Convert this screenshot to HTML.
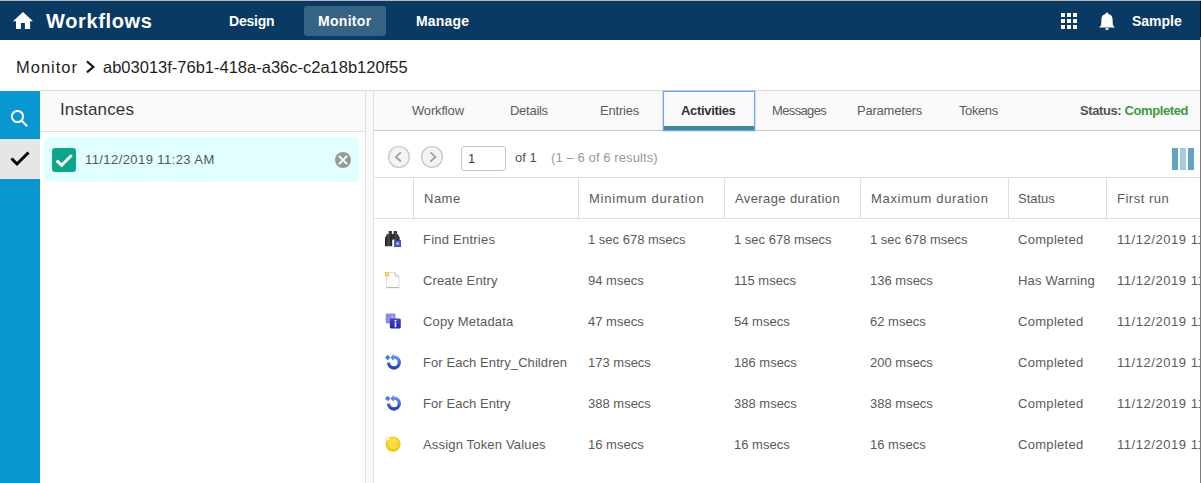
<!DOCTYPE html>
<html><head><meta charset="utf-8">
<style>
*{margin:0;padding:0;box-sizing:border-box}
html,body{width:1201px;height:483px;overflow:hidden;background:#fff;font-family:"Liberation Sans",sans-serif;position:relative}
.a{position:absolute;white-space:nowrap}
#topline{left:0;top:0;width:1201px;height:1px;background:#b9b6b5}
#hdr{left:0;top:1px;width:1201px;height:39px;background:#093a63}
#rline{left:1200px;top:37px;width:1px;height:446px;background:#7c7c7c;z-index:10}
#rline2{left:1200px;top:1px;width:1px;height:36px;background:#151515;z-index:10}
.nav{color:#fff;font-weight:bold;font-size:14px;top:13px;line-height:16px}
#act{left:304px;top:6px;width:82px;height:30px;background:#366284;border-radius:3px}
.crumb{font-size:16.5px;color:#1e1e1e;top:58px;line-height:19px}
#pline{left:40px;top:90px;width:1161px;height:1px;background:#dcdcdc}
#side{left:0;top:91px;width:40px;height:392px;background:#0897d1}
#sidegray{left:0;top:139px;width:40px;height:40px;background:#e6e6e6}
#insthdr{left:40px;top:91px;width:325px;height:41px;background:#fafafa;border-bottom:1px solid #dedede}
#gut{left:365px;top:91px;width:9px;height:392px;background:#f9f9f9;border-left:1px solid #e0e0e0;border-right:1px solid #e0e0e0}
#tabbar{left:374px;top:91px;width:826px;height:40px;background:#fafafa;border-bottom:1px solid #c8c8c8}
.tab{font-size:13px;color:#5c5c5c;top:103px;line-height:15px}
#acttab{left:663px;top:91px;width:92px;height:40px;border:1px solid #74a4f0;box-shadow:0 0 0 0.6px rgba(116,164,240,0.55);background:#fafafa}
#actbar{left:664px;top:126px;width:90px;height:4px;background:#3d8a94}
.cell{font-size:13px;color:#5a5a5a;line-height:15px}
.hline{height:1px;background:#e0e0e0}
.vline{width:1px;background:#e0e0e0}
</style></head><body>
<div class="a" id="topline"></div>
<div class="a" id="hdr"></div>
<!-- home icon -->
<svg class="a" style="left:13px;top:11px" width="21" height="19" viewBox="0 0 21 19"><path d="M10 1 L20 10.2 L17.1 10.2 L17.1 17.9 L11.9 17.9 L11.9 11.9 L7.9 11.9 L7.9 17.9 L3 17.9 L3 10.2 L0 10.2 Z" fill="#fff"/></svg>
<div class="a nav" style="left:46px;top:10px;font-size:20px;line-height:22px;letter-spacing:0.65px">Workflows</div>
<div class="a" id="act"></div>
<div class="a nav" style="left:229px;letter-spacing:-0.2px">Design</div>
<div class="a nav" style="left:318px;letter-spacing:0.3px">Monitor</div>
<div class="a nav" style="left:416px;letter-spacing:0.17px">Manage</div>
<!-- grid icon -->
<svg class="a" style="left:1061px;top:13px" width="16" height="16" viewBox="0 0 16 16" fill="#fff">
<rect x="0" y="0" width="4" height="4"/><rect x="6" y="0" width="4" height="4"/><rect x="12" y="0" width="4" height="4"/>
<rect x="0" y="6" width="4" height="4"/><rect x="6" y="6" width="4" height="4"/><rect x="12" y="6" width="4" height="4"/>
<rect x="0" y="12" width="4" height="4"/><rect x="6" y="12" width="4" height="4"/><rect x="12" y="12" width="4" height="4"/>
</svg>
<!-- bell -->
<svg class="a" style="left:1099px;top:12px" width="16" height="19" viewBox="0 0 16 19"><circle cx="8" cy="1.6" r="1.1" fill="#fff"/><path d="M8 1.8 C4.6 1.8 2.6 4 2.4 7.5 L2.2 12.2 C2.1 13.5 1 14.5 0.1 15.4 L15.9 15.4 C15 14.5 13.9 13.5 13.8 12.2 L13.6 7.5 C13.4 4 11.4 1.8 8 1.8 Z" fill="#fff"/><ellipse cx="8" cy="17" rx="1.7" ry="1" fill="#fff"/></svg>
<div class="a nav" style="left:1132px">Sample</div>
<div class="a" id="rline"></div><div class="a" id="rline2"></div>

<!-- breadcrumb -->
<div class="a crumb" style="left:16px;letter-spacing:0.98px">Monitor</div>
<svg class="a" style="left:86px;top:60px" width="10" height="14" viewBox="0 0 10 14"><path d="M0.9 1.4 L7.4 6.9 L0.9 12.4" stroke="#1e1e1e" stroke-width="2.2" fill="none"/></svg>
<div class="a crumb" style="left:103px">ab03013f-76b1-418a-a36c-c2a18b120f55</div>

<div class="a" id="pline"></div>
<div class="a" id="side"></div>
<div class="a" id="sidegray"></div>
<svg class="a" style="left:10px;top:110px" width="20" height="20" viewBox="0 0 20 20"><circle cx="7.5" cy="6.5" r="5.6" stroke="#fff" stroke-width="2" fill="none"/><path d="M11.5 10.5 L17.2 16.2" stroke="#fff" stroke-width="2"/></svg>
<svg class="a" style="left:10px;top:150px" width="20" height="17" viewBox="0 0 20 17"><path d="M1.5 8.5 L7 14 L18.5 2.5" stroke="#000" stroke-width="3" fill="none"/></svg>

<div class="a" id="insthdr"></div>
<div class="a" style="left:60px;top:100px;font-size:17px;line-height:20px;color:#333;letter-spacing:0.14px">Instances</div>
<div class="a" style="left:44px;top:137px;width:315px;height:45px;background:#e2ffff;border-radius:5px"></div>
<div class="a" style="left:52px;top:148px;width:24px;height:24px;background:#0ea68a;border-radius:3px"></div>
<svg class="a" style="left:52px;top:148px" width="24" height="24" viewBox="0 0 24 24"><path d="M4.6 12.6 L9.6 17.2 L19.6 7.2" stroke="#fff" stroke-width="3" fill="none"/></svg>
<div class="a" style="left:85px;top:152px;font-size:13px;line-height:15px;color:#555;letter-spacing:0.42px">11/12/2019 11:23 AM</div>
<svg class="a" style="left:335px;top:152px" width="16" height="16" viewBox="0 0 16 16"><circle cx="8" cy="8" r="8" fill="#999"/><path d="M3.9 3.9 L12.1 12.1 M12.1 3.9 L3.9 12.1" stroke="#fff" stroke-width="2"/></svg>

<div class="a" id="gut"></div>
<div class="a" id="tabbar"></div>
<div class="a" id="acttab"></div>
<div class="a" id="actbar"></div>
<div class="a tab" style="left:412px;letter-spacing:-0.17px">Workflow</div>
<div class="a tab" style="left:510px;letter-spacing:-0.27px">Details</div>
<div class="a tab" style="left:600px;letter-spacing:-0.2px">Entries</div>
<div class="a tab" style="left:681px;font-weight:bold;color:#333;letter-spacing:-0.33px">Activities</div>
<div class="a tab" style="left:772px;letter-spacing:-0.64px">Messages</div>
<div class="a tab" style="left:857px;letter-spacing:-0.21px">Parameters</div>
<div class="a tab" style="left:959px;letter-spacing:-0.4px">Tokens</div>
<div class="a tab" style="left:1080px;font-weight:bold;color:#555;letter-spacing:-0.4px">Status: <span style="color:#3c9a3c">Completed</span></div>

<!-- pagination -->
<svg class="a" style="left:386px;top:144px" width="26" height="26" viewBox="0 0 26 26"><circle cx="12.9" cy="12.9" r="10.4" fill="#f3f3f3" stroke="#c6c6c6" stroke-width="1.2"/><path d="M14.9 8.3 L9.9 12.9 L14.9 17.5" stroke="#a2a2a2" stroke-width="1.8" fill="none"/></svg>
<svg class="a" style="left:419px;top:144px" width="26" height="26" viewBox="0 0 26 26"><circle cx="13" cy="12.9" r="10.4" fill="#f3f3f3" stroke="#c6c6c6" stroke-width="1.2"/><path d="M11.4 8.3 L16.4 12.9 L11.4 17.5" stroke="#a2a2a2" stroke-width="1.8" fill="none"/></svg>
<div class="a" style="left:461px;top:146px;width:45px;height:25px;border:1px solid #c8c8c8;border-radius:3px;background:#fff"></div>
<div class="a cell" style="left:468px;top:151px;color:#3a3a4a">1</div>
<div class="a cell" style="left:515px;top:150px;color:#505050">of 1</div>
<div class="a cell" style="left:551px;top:150px;color:#999;letter-spacing:0.1px">(1 – 6 of 6 results)</div>
<svg class="a" style="left:1172px;top:148px" width="22" height="22" viewBox="0 0 22 22"><rect x="0" y="0" width="6" height="22" fill="#62a3c0"/><rect x="8" y="0" width="6" height="22" fill="#a9cbde"/><rect x="16" y="0" width="6" height="22" fill="#62a3c0"/></svg>

<!-- table -->
<div class="a hline" style="left:374px;top:177px;width:826px"></div>
<div class="a hline" style="left:374px;top:218px;width:826px"></div>
<div class="a vline" style="left:413px;top:178px;height:40px"></div>
<div class="a vline" style="left:578px;top:178px;height:40px"></div>
<div class="a vline" style="left:724px;top:178px;height:40px"></div>
<div class="a vline" style="left:860px;top:178px;height:40px"></div>
<div class="a vline" style="left:1008px;top:178px;height:40px"></div>
<div class="a vline" style="left:1106px;top:178px;height:40px"></div>
<div class="a cell" style="left:424px;top:191px;letter-spacing:0.5px">Name</div>
<div class="a cell" style="left:589px;top:191px;letter-spacing:0.76px">Minimum duration</div>
<div class="a cell" style="left:735px;top:191px;letter-spacing:0.39px">Average duration</div>
<div class="a cell" style="left:871px;top:191px;letter-spacing:0.67px">Maximum duration</div>
<div class="a cell" style="left:1018px;top:191px">Status</div>
<div class="a cell" style="left:1117px;top:191px;letter-spacing:0.5px">First run</div>

<div class="a cell" style="left:423px;top:232px;letter-spacing:0.23px">Find Entries</div>
<div class="a cell" style="left:588px;top:232px">1 sec 678 msecs</div>
<div class="a cell" style="left:734px;top:232px">1 sec 678 msecs</div>
<div class="a cell" style="left:870px;top:232px">1 sec 678 msecs</div>
<div class="a cell" style="left:1018px;top:232px;letter-spacing:0.3px">Completed</div>
<div class="a cell" style="left:1117px;letter-spacing:0.55px;top:232px">11/12/2019 11:23 AM</div>
<div class="a cell" style="left:423px;top:273px;letter-spacing:0.14px">Create Entry</div>
<div class="a cell" style="left:588px;top:273px">94 msecs</div>
<div class="a cell" style="left:734px;top:273px">115 msecs</div>
<div class="a cell" style="left:870px;top:273px">136 msecs</div>
<div class="a cell" style="left:1018px;top:273px;letter-spacing:0.2px">Has Warning</div>
<div class="a cell" style="left:1117px;letter-spacing:0.55px;top:273px">11/12/2019 11:23 AM</div>
<div class="a cell" style="left:423px;top:314px;letter-spacing:0.17px">Copy Metadata</div>
<div class="a cell" style="left:588px;top:314px">47 msecs</div>
<div class="a cell" style="left:734px;top:314px">54 msecs</div>
<div class="a cell" style="left:870px;top:314px">62 msecs</div>
<div class="a cell" style="left:1018px;top:314px;letter-spacing:0.3px">Completed</div>
<div class="a cell" style="left:1117px;letter-spacing:0.55px;top:314px">11/12/2019 11:23 AM</div>
<div class="a cell" style="left:423px;top:355px;letter-spacing:0.08px">For Each Entry_Children</div>
<div class="a cell" style="left:588px;top:355px">173 msecs</div>
<div class="a cell" style="left:734px;top:355px">186 msecs</div>
<div class="a cell" style="left:870px;top:355px">200 msecs</div>
<div class="a cell" style="left:1018px;top:355px;letter-spacing:0.3px">Completed</div>
<div class="a cell" style="left:1117px;letter-spacing:0.55px;top:355px">11/12/2019 11:23 AM</div>
<div class="a cell" style="left:423px;top:396px;letter-spacing:0.07px">For Each Entry</div>
<div class="a cell" style="left:588px;top:396px">388 msecs</div>
<div class="a cell" style="left:734px;top:396px">388 msecs</div>
<div class="a cell" style="left:870px;top:396px">388 msecs</div>
<div class="a cell" style="left:1018px;top:396px;letter-spacing:0.3px">Completed</div>
<div class="a cell" style="left:1117px;letter-spacing:0.55px;top:396px">11/12/2019 11:23 AM</div>
<div class="a cell" style="left:423px;top:437px;letter-spacing:0.17px">Assign Token Values</div>
<div class="a cell" style="left:588px;top:437px">16 msecs</div>
<div class="a cell" style="left:734px;top:437px">16 msecs</div>
<div class="a cell" style="left:870px;top:437px">16 msecs</div>
<div class="a cell" style="left:1018px;top:437px;letter-spacing:0.3px">Completed</div>
<div class="a cell" style="left:1117px;letter-spacing:0.55px;top:437px">11/12/2019 11:23 AM</div>

<!-- binoculars -->
<svg class="a" style="left:385px;top:231px" width="16" height="16" viewBox="0 0 16 16">
<defs><linearGradient id="gb" x1="0" y1="0" x2="1" y2="0"><stop offset="0" stop-color="#1a1a1a"/><stop offset="0.5" stop-color="#4a4a4a"/><stop offset="1" stop-color="#1e1e1e"/></linearGradient></defs>
<path d="M3.6 0 H6.8 V3 H7.2 V15.3 H0 V7 L2 3 H3.6 Z" fill="url(#gb)"/>
<path d="M8.6 0 H12 V3 H12.6 L14.6 6.5 V15.3 H9.6 V8.5 H7.3 V3 H8.6 Z" fill="url(#gb)"/>
<rect x="6.6" y="3.5" width="1.6" height="5" fill="#333"/>
<rect x="9.8" y="9.6" width="6" height="6" fill="#3d68e0" stroke="#2a3f95" stroke-width="0.8"/>
<circle cx="12.6" cy="12.6" r="1.2" fill="#e8e048"/>
</svg>
<!-- document -->
<svg class="a" style="left:385px;top:272px" width="16" height="17" viewBox="0 0 16 17">
<path d="M1.5 0.5 H10 L14 4 V15.5 H1.5 Z" fill="#fdfdfd" stroke="#dcdcdc" stroke-width="1"/>
<path d="M1.8 15.6 H14.2" stroke="#b4b4b4" stroke-width="1.1"/>
<path d="M10 0.5 V4 H14" fill="#eeeeee" stroke="#c6c6c6" stroke-width="1"/>
<rect x="0" y="0" width="4.2" height="4.3" fill="#e9c85a"/>
<rect x="1.2" y="1.2" width="1.8" height="1.9" fill="#f6e7b0"/>
</svg>
<!-- copy metadata -->
<svg class="a" style="left:385px;top:313px" width="16" height="16" viewBox="0 0 16 16">
<defs><linearGradient id="gd" x1="0" y1="0" x2="0" y2="1"><stop offset="0" stop-color="#4747cf"/><stop offset="1" stop-color="#2424a6"/></linearGradient></defs>
<rect x="0.7" y="0.5" width="9.8" height="10" rx="1.3" fill="#8b8bf2"/>
<rect x="6.3" y="3.2" width="2" height="1.2" fill="#d8d8ff"/>
<rect x="4.8" y="5.6" width="11" height="9.8" rx="1.3" fill="url(#gd)"/>
<rect x="9.6" y="7" width="1.8" height="1.5" fill="#fff"/>
<rect x="9.7" y="9.2" width="1.6" height="5" fill="#f0f0ff"/>
</svg>
<svg class="a" style="left:385px;top:354px" width="16" height="16" viewBox="0 0 16 16">
<defs><linearGradient id="gl354" x1="0" y1="0" x2="0" y2="1"><stop offset="0" stop-color="#5f8ff0"/><stop offset="1" stop-color="#2143bf"/></linearGradient></defs>
<path d="M3.5 8.6 A5.4 5.4 0 1 0 8.9 3.2" stroke="url(#gl354)" stroke-width="3.3" fill="none"/>
<path d="M5.6 3.5 L8.7 0.1 L8.7 6.9 Z" fill="#4a78e6"/>
<path d="M0 3.5 L2.7 0.7 L5.4 3.5 L2.7 6.3 Z" fill="#4a7ae6"/>
</svg>
<svg class="a" style="left:385px;top:395px" width="16" height="16" viewBox="0 0 16 16">
<defs><linearGradient id="gl395" x1="0" y1="0" x2="0" y2="1"><stop offset="0" stop-color="#5f8ff0"/><stop offset="1" stop-color="#2143bf"/></linearGradient></defs>
<path d="M3.5 8.6 A5.4 5.4 0 1 0 8.9 3.2" stroke="url(#gl395)" stroke-width="3.3" fill="none"/>
<path d="M5.6 3.5 L8.7 0.1 L8.7 6.9 Z" fill="#4a78e6"/>
<path d="M0 3.5 L2.7 0.7 L5.4 3.5 L2.7 6.3 Z" fill="#4a7ae6"/>
</svg>
<!-- coin -->
<svg class="a" style="left:385px;top:436px" width="16" height="16" viewBox="0 0 16 16">
<defs><radialGradient id="gc" cx="0.45" cy="0.4" r="0.6"><stop offset="0" stop-color="#fbe34a"/><stop offset="1" stop-color="#efc40c"/></radialGradient></defs>
<circle cx="8" cy="8.1" r="7.6" fill="url(#gc)"/>
<rect x="5.6" y="3.8" width="6.2" height="8" rx="0.8" fill="none" stroke="#f9e56a" stroke-width="0.9"/>
<path d="M7.2 5.4 V10.2 H10 M7.2 7.8 H9.4 M7.2 5.4 H9.6" stroke="#f7dc48" stroke-width="0.9" fill="none"/>
<circle cx="2.4" cy="2.4" r="2.2" fill="#f6eeb8"/>
<circle cx="2.4" cy="2.4" r="1" fill="#fffbe8"/>
</svg>

</body></html>
